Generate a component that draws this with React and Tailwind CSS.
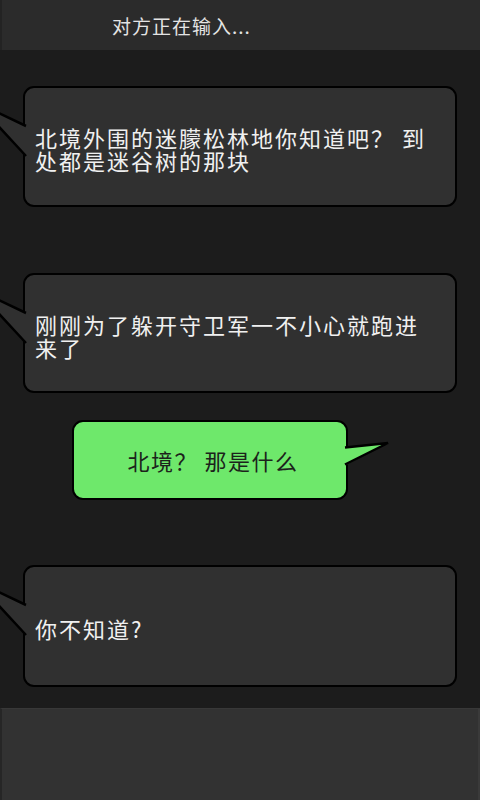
import React from 'react';

const font = { fontFamily: '"Noto Sans CJK SC", "Noto Sans", sans-serif' };

const messages = [
  { id: 1, from: 'them', text: '北境外围的迷朦松林地你知道吧？ 到处都是迷谷树的那块', mt: 'mt-[36px]', h: 'h-[121px]' },
  { id: 2, from: 'them', text: '刚刚为了躲开守卫军一不小心就跑进来了', mt: 'mt-[66px]', h: 'h-[120px]' },
  { id: 3, from: 'me', text: '北境？ 那是什么', mt: 'mt-[27px]', h: 'h-[80px]' },
  { id: 4, from: 'them', text: '你不知道?', mt: 'mt-[65px]', h: 'h-[122px]' },
];

const LeftTail = () => (
  <svg className="absolute left-[-50px] top-0" width="54" height="80" viewBox="0 0 54 80">
    <polygon points="1,14 54,39.4 54,71.3" fill="#303030" />
    <polyline points="51,38 1,14 51,68" fill="none" stroke="#000" strokeWidth="2.5" />
  </svg>
);

const RightTail = () => (
  <svg className="absolute left-[calc(100%-4px)] top-0" width="50" height="50" viewBox="0 0 50 50">
    <polygon points="0,25.8 46,21 0,45" fill="#6ee86b" />
    <polyline points="3,25.5 46,21 3,42.5" fill="none" stroke="#000" strokeWidth="2.5" />
  </svg>
);

const Bubble = ({ msg }) => {
  if (msg.from === 'me') {
    return (
      <div className={`${msg.mt} pl-[72px]`}>
        <div className={`relative ${msg.h} w-[276px] bg-[#6ee86b] border-2 border-black rounded-[11px] flex items-center justify-center pl-[6px]`}>
          <RightTail />
          <p className="text-[22px] leading-[23px] tracking-[1.5px] text-[#1c231b]">{msg.text}</p>
        </div>
      </div>
    );
  }
  return (
    <div className={`${msg.mt} pl-[23px]`}>
      <div className={`relative ${msg.h} w-[434px] bg-[#303030] border-2 border-black rounded-[11px] flex items-center pl-[10px] pt-[5px]`}>
        <LeftTail />
        <p className="w-[400px] text-[22px] leading-[23px] tracking-[2px] text-[#f0f0f0]">{msg.text}</p>
      </div>
    </div>
  );
};

export default function App() {
  return (
    <div className="w-[480px] h-[800px] bg-[#1c1c1c] flex flex-col overflow-hidden" style={font}>
      <header className="h-[50px] shrink-0 bg-[#2b2b2b] border-l-2 border-[#232323] flex items-center pl-[110px] pt-[2px]">
        <span className="text-[19px] tracking-[1px] text-[#e4e4e4]">对方正在输入...</span>
      </header>

      <main className="flex-1 flex flex-col">
        {messages.map((m) => (
          <Bubble key={m.id} msg={m} />
        ))}
      </main>

      <footer className="h-[92px] shrink-0 bg-[#323232] border-t border-[#383838] border-r-2 border-r-[#3a3a3a] border-l-2 border-l-[#262626]" />
    </div>
  );
}
